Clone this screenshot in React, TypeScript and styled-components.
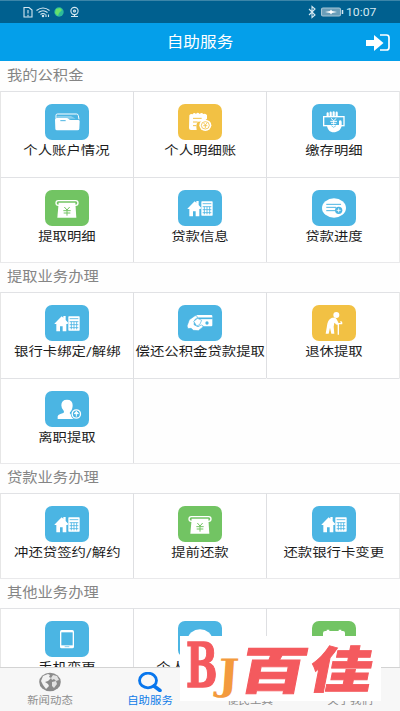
import React from "react";
import styled, { createGlobalStyle } from "styled-components";

const BLUE = "#4bb5e3";
const YELLOW = "#f2c144";
const GREEN = "#72c463";

const GlobalStyle = createGlobalStyle`
  * { box-sizing: border-box; }
  html, body { margin: 0; padding: 0; overflow: hidden; background: #fefefe; }
  body { font-family: Roboto, "Noto Sans CJK SC", sans-serif; }
`;

const Screen = styled.div`
  position: relative;
  display: flex;
  flex-direction: column;
  width: 400px;
  height: 711px;
  overflow: hidden;
  background: #fefefe;
`;

const StatusBar = styled.div`
  flex: none;
  display: flex;
  justify-content: space-between;
  height: 23px;
  padding: 0 23px 1px;
  background: #00608f;
  border-top: 1px solid #3c86a9;
  color: #d5e8f1;
`;

const StatusGroup = styled.div`
  display: flex;
  align-items: center;
`;

const Clock = styled.span`
  width: 31px;
  font-size: 11.5px;
  line-height: 20px;
  white-space: nowrap;
  transform: scaleX(1.06);
  transform-origin: left;
`;

const Header = styled.header`
  flex: none;
  display: grid;
  grid-template-columns: 40px 1fr 40px;
  align-items: center;
  height: 38px;
  background: #049fea;
  color: #fff;
`;

const Wide = styled.span<{ $stretch: number }>`
  display: inline-block;
  white-space: nowrap;
  transform: scaleX(${(p) => p.$stretch});
`;

const Title = styled.h1`
  grid-column: 2;
  margin: 0;
  text-align: center;
  font-size: 15px;
  font-weight: 400;
  line-height: 38px;
`;

const LoginButton = styled.div`
  display: flex;
  padding-left: 5px;
  padding-top: 1px;
`;

const Content = styled.main`
  flex: 1;
  min-height: 0;
  overflow: hidden;
`;

const SectionTitle = styled.h2`
  height: 30px;
  margin: 0;
  padding-left: 7px;
  font-size: 13.8px;
  font-weight: 400;
  line-height: 29px;
  color: #858585;
  span { transform-origin: left; }
`;

const FirstTitle = styled(SectionTitle)`
  line-height: 28px;
`;

const Grid = styled.div<{ $rows: number }>`
  display: grid;
  grid-template-columns: 134px 133px 133px;
  grid-template-rows: ${(p) => (p.$rows === 2 ? "86px 85px" : "85px")};
  border-bottom: 1px solid #e9e9eb;
  margin-bottom: -1px;
`;

const Cell = styled.div<{ $empty?: boolean }>`
  display: flex;
  flex-direction: column;
  align-items: center;
  padding-top: 12px;
  border-top: 1px solid #e1e2e5;
  border-right: 1px solid ${(p) => (p.$empty ? "transparent" : "#dedfe2")};
  background: ${(p) => (p.$empty ? "transparent" : "#fff")};
  &:nth-child(3n + 1) { border-left: 1px solid #e6e6e6; }
  &:nth-child(3n) {
    padding-left: 2px;
    border-right-color: ${(p) => (p.$empty ? "transparent" : "#e9e9e9")};
  }
`;

const Tile = styled.div<{ $color: string }>`
  width: 44px;
  height: 36px;
  border-radius: 7px;
  background: ${(p) => p.$color};
  svg { display: block; }
`;

const Label = styled.div`
  margin-top: 1px;
  font-size: 12.5px;
  line-height: 20px;
  height: 20px;
  color: #1c1c1c;
`;

const TabBar = styled.nav`
  flex: none;
  display: grid;
  grid-template-columns: repeat(4, 1fr);
  height: 44px;
  border-top: 1px solid #d3d3d3;
  background: #f7f7f7;
`;

const Tab = styled.div<{ $active?: boolean }>`
  display: flex;
  flex-direction: column;
  align-items: center;
  padding-top: 4px;
  color: ${(p) => (p.$active ? "#0f7be8" : "#8e8e8e")};
  font-size: 10px;
  line-height: 14px;
  svg { display: block; flex: none; margin-bottom: 2px; }
`;

const Brand = styled.div`
  position: absolute;
  left: 180px;
  top: 636px;
  width: 201px;
  height: 65px;
  overflow: hidden;
  background: #fff;
  svg { display: block; }
`;

type IconName =
  | "wallet" | "bill" | "pay" | "atm" | "house" | "progress"
  | "handcard" | "elder" | "leave" | "phone" | "person" | "calendar";

const Atm = () => (
  <>
    <rect x="33" y="32" width="66" height="14" rx="7" fill="none" stroke="#fff" strokeWidth="4" />
    <path d="M41 38H91L94 83H37Z" fill="#fff" />
    <path d="M58 51l8 9 8-9M55 62h22M56 69h20M66 60v17" stroke={GREEN} strokeWidth="3" fill="none" />
  </>
);

const House = () => (
  <>
    <path d="M28 56L50 34l5 4v-5h7v12l8 9-3 3h-3v22H53V64h-8v15H34V57h-4Z" fill="#fff" />
    <rect x="70" y="34" width="34" height="43" rx="2" fill="#fff" />
    <path d="M74 41h26M74 50h26M74 59h26M74 68h26M79 50v23M87 50v23M95 50v23" stroke={BLUE} strokeWidth="2.5" fill="none" />
  </>
);

const drawings: Record<IconName, React.ReactNode> = {
  wallet: (
    <>
      <path d="M33 43v-9q0-4 4-4h58q4 0 5 5l2 11" fill="none" stroke="#fff" strokeWidth="3" />
      <path d="M37 36h41l14 8H36Z" fill="#fff" opacity=".35" />
      <path d="M30 47q0-5 5-5h29q5 0 7 3t7 3h22q4 0 4 4l-1 22q0 5-6 5H36q-5 0-5-5Z" fill="#fff" />
      <path d="M46 50h16" stroke={BLUE} strokeWidth="3" />
    </>
  ),
  bill: (
    <>
      <path d="M34 34q4-6 10-3 4-7 10-1 5-7 11 0 6-6 11 0 8-3 11 4v10q-5 3-7 8l-20 1q-7 6-4 25H39q-6 0-6-6Z" fill="#fff" />
      <path d="M45 43h26M45 54h14M45 65h10" stroke={YELLOW} strokeWidth="3" />
      <ellipse cx="82" cy="64" rx="18" ry="17" fill="#fff" />
      <ellipse cx="82" cy="64" rx="12" ry="11" fill="none" stroke={YELLOW} strokeWidth="2.5" />
      <path d="M77 57l5 6 5-6M76 65h12M82 63v9" stroke={YELLOW} strokeWidth="2.5" fill="none" />
    </>
  ),
  pay: (
    <>
      <path d="M47 40V28M56 38V26M65 38V25M74 40V26" stroke="#fff" strokeWidth="6.5" strokeLinecap="round" />
      <rect x="35" y="38" width="61" height="27" fill={BLUE} stroke="#fff" strokeWidth="4" />
      <path d="M57 43l8 7 8-7M55 52h20M57 58h16M65 50v12" stroke="#fff" strokeWidth="3" fill="none" />
      <path d="M45 65h36V50q8-4 8 4v13q-4 14-16 16-8 3-16 0-10-4-12-18Z" fill="#fff" />
      <path d="M58 65l7 5 7-5" stroke={BLUE} strokeWidth="2" fill="none" />
    </>
  ),
  atm: <Atm />,
  house: <House />,
  progress: (
    <>
      <ellipse cx="66" cy="54" rx="36" ry="29" fill="#fff" />
      <path d="M44 43h42M44 52h27M44 62h24" stroke={BLUE} strokeWidth="3" strokeLinecap="round" />
      <circle cx="80" cy="61" r="11" fill={BLUE} />
      <path d="M80 55v12M74 61h12" stroke="#fff" strokeWidth="2.5" />
    </>
  ),
  handcard: (
    <>
      <rect x="54" y="30" width="49" height="34" rx="3" fill="#fff" />
      <path d="M56 40h48" stroke={BLUE} strokeWidth="5" />
      <circle cx="87" cy="54" r="5" fill={BLUE} />
      <path d="M27 63l7-19 17-12q7-2 7 5l-8 8-2 14 12 6 10-5q7 1 5 6l-14 11-15-1-7-6-9 1Z" fill="#fff" stroke={BLUE} strokeWidth="2" />
      <path d="M47 49l12-9 12 6-6 13-9 4Z" fill="#fff" stroke={BLUE} strokeWidth="2" />
    </>
  ),
  elder: (
    <>
      <circle cx="73" cy="30" r="9" fill="#fff" />
      <path d="M64 38q7-1 10 5l6 12-4 5-9-7-2 12 2 21h-9l-4-18-4 18h-9l5-30q3-14 14-18Z" fill="#fff" />
      <path d="M71 56h18q1-5-4-6M79 56v33" stroke="#fff" strokeWidth="4" fill="none" />
    </>
  ),
  leave: (
    <>
      <path d="M49 43q0-17 17-17t17 17q0 14-8 21-3 4 5 7l10 4v9H38v-8q1-5 8-7l9-3q4-3 1-7-7-6-7-16Z" fill="#fff" />
      <circle cx="94" cy="69" r="17" fill={BLUE} />
      <circle cx="94" cy="69" r="12.500" fill={BLUE} stroke="#fff" strokeWidth="4" />
      <path d="M94 77V64M88 68l6-7 6 7Z" fill="#fff" stroke="#fff" strokeWidth="3" />
    </>
  ),
  phone: (
    <>
      <rect x="45" y="27" width="42" height="55" rx="5" fill="#fff" />
      <rect x="49" y="34" width="34" height="39" fill={BLUE} />
      <path d="M59 77h14" stroke={BLUE} strokeWidth="2" />
    </>
  ),
  person: <ellipse cx="66" cy="54" rx="36" ry="29" fill="#fff" />,
  calendar: <path d="M33 36q0-6 7-6h4v-4h8v4h28v-4h8v4h5q6 0 6 6v42H33Z" fill="#fff" />,
};

type Item = [string, IconName, string];
const sections: { title: string; items: Item[] }[] = [
  {
    title: "我的公积金",
    items: [
      ["个人账户情况", "wallet", BLUE],
      ["个人明细账", "bill", YELLOW],
      ["缴存明细", "pay", BLUE],
      ["提取明细", "atm", GREEN],
      ["贷款信息", "house", BLUE],
      ["贷款进度", "progress", BLUE],
    ],
  },
  {
    title: "提取业务办理",
    items: [
      ["银行卡绑定/解绑", "house", BLUE],
      ["偿还公积金贷款提取", "handcard", BLUE],
      ["退休提取", "elder", YELLOW],
      ["离职提取", "leave", BLUE],
    ],
  },
  {
    title: "贷款业务办理",
    items: [
      ["冲还贷签约/解约", "house", BLUE],
      ["提前还款", "atm", GREEN],
      ["还款银行卡变更", "house", BLUE],
    ],
  },
  {
    title: "其他业务办理",
    items: [
      ["手机变更", "phone", BLUE],
      ["个人信息变更", "person", BLUE],
      ["业务预约", "calendar", GREEN],
    ],
  },
];

function Section({ title, items, first }: { title: string; items: Item[]; first: boolean }) {
  const rows = Math.ceil(items.length / 3);
  const cells: (Item | null)[] = [...items];
  while (cells.length < rows * 3) cells.push(null);
  const Heading = first ? FirstTitle : SectionTitle;
  return (
    <section>
      <Heading><Wide $stretch={1.108}>{title}</Wide></Heading>
      <Grid $rows={rows}>
        {cells.map((c, i) => (
          <Cell key={i} $empty={!c}>
            {c && (
              <>
                <Tile $color={c[2]}>
                  <svg width="44" height="36" viewBox="0 0 132 108">{drawings[c[1]]}</svg>
                </Tile>
                <Label><Wide $stretch={1.15}>{c[0]}</Wide></Label>
              </>
            )}
          </Cell>
        ))}
      </Grid>
    </section>
  );
}

const StatusLeft = () => (
  <svg width="60" height="14" viewBox="0 0 60 14" fill="none" stroke="#d5e8f1" strokeWidth="1.1">
    <path d="M1 2.5h5l3 2.5v7H1ZM5 5v3.5M5 9.8v1.4" />
    <path d="M13.5 5.5q6.500-5 13 0M15.500 7.500q4.500-3.500 9 0M17.500 9.500q2.500-2 5 0" />
    <circle cx="20" cy="11" r=".7" fill="#d5e8f1" />
    <path d="M23 9.500v2.500M25.500 9.500v2.500" />
    <circle cx="36" cy="7" r="4.700" fill="#2dba9a" stroke="none" />
    <path d="M33 4l4-1 2 2-3 3-1 3-3-3Z" fill="#65e06c" stroke="none" />
    <circle cx="51.500" cy="6" r="3.600" />
    <circle cx="51.500" cy="6" r="1" />
    <path d="M48 11.500h7M51.500 9.500v2" />
  </svg>
);

const StatusRight = () => (
  <svg width="38" height="14" viewBox="0 0 38 14" fill="none" stroke="#d5e8f1" strokeWidth="1.1">
    <path d="M1 4l6 6-3 2.500v-11L7 4 1 10" />
    <rect x="13.500" y="3" width="19" height="8" rx="1.500" fill="#6a9eb9" stroke="#a5c5d5" />
    <path d="M17 7l5-1 1-1.500 1 1.500 5 1-5 1-1 1.500L22 8Z" fill="#fff" stroke="none" />
    <path d="M34.500 5v4" strokeWidth="1.500" />
  </svg>
);

export default function App() {
  return (
    <>
      <GlobalStyle />
      <Screen>
        <StatusBar>
          <StatusGroup><StatusLeft /></StatusGroup>
          <StatusGroup><StatusRight /><Clock>10:07</Clock></StatusGroup>
        </StatusBar>
        <Header>
          <Title><Wide $stretch={1.11}>自助服务</Wide></Title>
          <LoginButton>
            <svg width="26" height="20" viewBox="0 0 26 20">
              <path d="M1 7h8V2l9.500 8L9 18v-5H1Z" fill="#fff" />
              <path d="M15 2h6.500q2.500 0 2.500 2.500v10q0 2.500-2.500 2.500H15" fill="none" stroke="#fff" strokeWidth="1.700" />
            </svg>
          </LoginButton>
        </Header>
        <Content>
          {sections.map((s, i) => <Section key={s.title} {...s} first={i === 0} />)}
        </Content>
        <TabBar>
          <Tab>
            <svg width="22" height="20" viewBox="0 0 22 20">
              <ellipse cx="11" cy="10" rx="10.800" ry="9.300" fill="#8b8b8b" />
              <path d="M4 4l5-2 2 1-1 2 2 1-3 3-3 1 3 2 1 2-3 3-3-4-2-4Z" fill="#f2f2f2" />
              <path d="M14 3l4 1 2 4-3 1-2-2-2 1-1-2ZM13 10l4-1 1 3-3 4-2-2Z" fill="#e2e2e2" />
            </svg>
            <Wide $stretch={1.14}>新闻动态</Wide>
          </Tab>
          <Tab $active>
            <svg width="24" height="20" viewBox="0 0 24 20" fill="none" stroke="#0876ed">
              <ellipse cx="10" cy="8.500" rx="8.500" ry="7.300" strokeWidth="2.800" />
              <path d="M16 14l6 4.500" strokeWidth="3.600" strokeLinecap="round" />
            </svg>
            <Wide $stretch={1.14}>自助服务</Wide>
          </Tab>
          <Tab>
            <svg width="22" height="20" />
            <Wide $stretch={1.14}>便民工具</Wide>
          </Tab>
          <Tab>
            <svg width="22" height="20" />
            <Wide $stretch={1.14}>关于我们</Wide>
          </Tab>
        </TabBar>
        <Brand>
          <svg width="201" height="65" viewBox="0 0 201 65">
            <g fill="#f45a5e" stroke="#f45a5e">
              <text transform="translate(6 50.500) scale(.6 1)" fontFamily="DejaVu Serif, serif" fontWeight="700" fontSize="62" strokeWidth="1.500">B</text>
              <g fontFamily="Noto Sans CJK SC, sans-serif" fontWeight="900" fontSize="59" strokeWidth="1">
                <text transform="translate(57 52.500) skewX(-11) scale(1.130 .86)">百</text>
                <text transform="translate(127 52) skewX(-11) scale(1.060 .84)">佳</text>
              </g>
            </g>
            <text transform="translate(37 52.500) skewX(-4) scale(1.050 1)" fontFamily="DejaVu Serif, serif" fontWeight="700" fontSize="42" fill="#f39a3d" stroke="#fff" strokeWidth="3" paintOrder="stroke">J</text>
          </svg>
        </Brand>
      </Screen>
    </>
  );
}
